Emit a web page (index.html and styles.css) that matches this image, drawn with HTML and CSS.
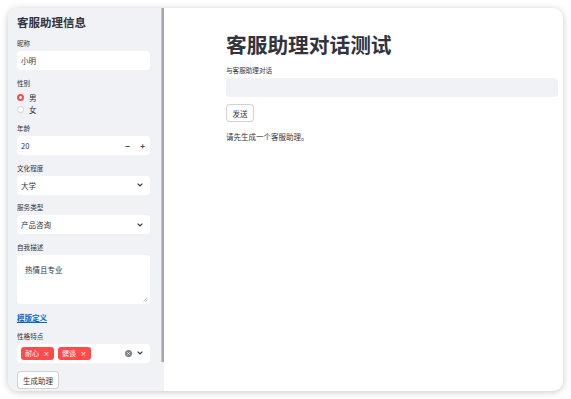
FILE: index.html
```html
<!DOCTYPE html>
<html lang="zh">
<head>
  <meta charset="UTF-8" />
  <meta name="viewport" content="width=device-width, initial-scale=1.0"/>
  <title>客服助理对话测试</title>
<link rel="stylesheet" href="styles.css">
</head>
<body>
  <div class="window">
    <aside class="sidebar">
      <div class="side-content">
        <h2 class="side-title">客服助理信息</h2>

        <div class="field">
          <label class="field-label">昵称</label>
          <div class="box">小明</div>
        </div>

        <div class="field">
          <label class="field-label">性别</label>
          <div class="radio-group">
            <div class="radio-row"><span class="radio checked"></span>男</div>
            <div class="radio-row"><span class="radio"></span>女</div>
          </div>
        </div>

        <div class="field">
          <label class="field-label">年龄</label>
          <div class="box number-box">
            <span class="box-value">20</span>
            <span class="step">&minus;</span>
            <span class="step">+</span>
          </div>
        </div>

        <div class="field">
          <label class="field-label">文化程度</label>
          <div class="box select-box">
            <span class="box-value">大学</span>
            <svg class="chevron" width="6" height="4" viewBox="0 0 6 4"><polyline points="0.6,0.6 3,3 5.4,0.6" fill="none" stroke="#31333f" stroke-width="1.2"/></svg>
          </div>
        </div>

        <div class="field">
          <label class="field-label">服务类型</label>
          <div class="box select-box">
            <span class="box-value">产品咨询</span>
            <svg class="chevron" width="6" height="4" viewBox="0 0 6 4"><polyline points="0.6,0.6 3,3 5.4,0.6" fill="none" stroke="#31333f" stroke-width="1.2"/></svg>
          </div>
        </div>

        <div class="field">
          <label class="field-label">自我描述</label>
          <div class="box textarea-box">
            <span>热情且专业</span>
            <svg class="resize" width="5" height="5" viewBox="0 0 5 5"><line x1="0.5" y1="4.5" x2="4.5" y2="0.5" stroke="#9a9ca4" stroke-width="0.6"/><line x1="2.5" y1="4.5" x2="4.5" y2="2.5" stroke="#9a9ca4" stroke-width="0.6"/></svg>
          </div>
        </div>

        <a class="template-link" href="#">模版定义</a>

        <div class="field">
          <label class="field-label">性格特点</label>
          <div class="box multi-box">
            <span class="tag">耐心<span class="tag-x">×</span></span>
            <span class="tag">健谈<span class="tag-x">×</span></span>
            <span class="multi-icons">
              <svg width="7" height="7" viewBox="0 0 7 7"><circle cx="3.5" cy="3.5" r="3.5" fill="#7f828c"/><path d="M2.3 2.3 L4.7 4.7 M4.7 2.3 L2.3 4.7" stroke="#fff" stroke-width="0.8"/></svg>
              <svg width="6" height="4" viewBox="0 0 6 4"><polyline points="0.6,0.6 3,3 5.4,0.6" fill="none" stroke="#31333f" stroke-width="1.2"/></svg>
            </span>
          </div>
        </div>

        <button class="btn">生成助理</button>
      </div>
      <div class="scroll-track"><div class="scroll-thumb"></div></div>
    </aside>

    <main class="main">
      <h1 class="main-title">客服助理对话测试</h1>
      <label class="field-label">与客服助理对话</label>
      <div class="chat-input"></div>
      <button class="btn send-btn">发送</button>
      <p class="notice">请先生成一个客服助理。</p>
    </main>
  </div>
</body>
</html>
```

FILE: styles.css
```css
body {
  margin: 0;
  padding: 0;
  background: #ffffff;
  font-family: "Noto Sans CJK SC", "Noto Sans", sans-serif;
  color: #31333f;
}

.window {
  margin: 8px;
  width: 555px;
  height: 383px;
  border-radius: 10px;
  overflow: hidden;
  display: flex;
  background: #ffffff;
  box-shadow: 0 1px 7px rgba(0, 0, 0, 0.22);
}

.sidebar {
  width: 156px;
  flex-shrink: 0;
  display: flex;
  background: #f0f2f6;
  overflow: hidden;
}

.side-content {
  width: 153px;
  box-sizing: border-box;
  padding: 7px 11px 0 9px;
  display: flex;
  flex-direction: column;
  align-items: stretch;
  gap: 8.5px;
}

.scroll-track {
  width: 3px;
  flex-shrink: 0;
}

.scroll-thumb {
  height: 354px;
  background: #a3a5aa;
  border-left: 1px solid #c4c6cb;
  box-sizing: border-box;
}

.side-title {
  margin: 0 0 0.5px 0;
  font-size: 11.5px;
  line-height: 15px;
  font-weight: 700;
}

.field {
  display: flex;
  flex-direction: column;
}

.field-label {
  display: block;
  font-size: 6.6px;
  line-height: 9px;
  margin-bottom: 3px;
}

.box {
  height: 19px;
  box-sizing: border-box;
  background: #ffffff;
  border-radius: 4px;
  padding: 0 4px;
  font-size: 7.5px;
  display: flex;
  align-items: center;
}

.box-value {
  flex: 1;
}

.number-box {
  padding-right: 0;
}

.step {
  width: 15px;
  text-align: center;
  font-size: 8px;
  font-weight: 700;
}

.select-box {
  padding-right: 7px;
}

.textarea-box {
  height: 49px;
  align-items: flex-start;
  padding: 9px 8px 0 8px;
  position: relative;
}

.resize {
  position: absolute;
  right: 2px;
  bottom: 2px;
}

.template-link {
  font-size: 7.5px;
  line-height: 11px;
  font-weight: 600;
  color: #0068c9;
  text-decoration: underline;
  align-self: flex-start;
}

.radio-group {
  padding-top: 1px;
}

.radio-row {
  height: 12px;
  display: flex;
  align-items: center;
  font-size: 7.5px;
  gap: 4.5px;
}

.radio {
  width: 7.4px;
  height: 7.4px;
  box-sizing: border-box;
  border-radius: 50%;
  background: #ffffff;
  border: 0.6px solid #cfd1d6;
}

.radio.checked {
  border: 2.2px solid #ff4b4b;
}

.multi-box {
  gap: 4.5px;
  padding-right: 7px;
}

.tag {
  height: 13px;
  display: flex;
  align-items: center;
  gap: 4px;
  padding: 0 4px;
  border-radius: 3px;
  background: #ff4b4b;
  color: #ffffff;
  font-size: 7px;
}

.tag-x {
  font-size: 6.5px;
}

.multi-icons {
  margin-left: auto;
  display: flex;
  align-items: center;
  gap: 5px;
}

.btn {
  display: block;
  align-self: flex-start;
  font-family: inherit;
  font-size: 7.5px;
  color: #31333f;
  background: #ffffff;
  border: 0.6px solid rgba(49, 51, 63, 0.22);
  border-radius: 4px;
  height: 18px;
  padding: 0 5px;
  cursor: pointer;
}

.main {
  flex: 1;
  padding: 24px 5px 0 62px;
}

.main-title {
  margin: 0;
  font-size: 20.7px;
  line-height: 24px;
  font-weight: 700;
}

.main .field-label {
  margin-top: 9.5px;
}

.chat-input {
  height: 19px;
  border-radius: 4px;
  background: #f0f2f6;
  margin-bottom: 7.5px;
}

.send-btn {
  width: 28px;
  padding: 0;
}

.notice {
  margin: 8.5px 0 0 0;
  font-size: 7.5px;
  line-height: 11px;
}
```
